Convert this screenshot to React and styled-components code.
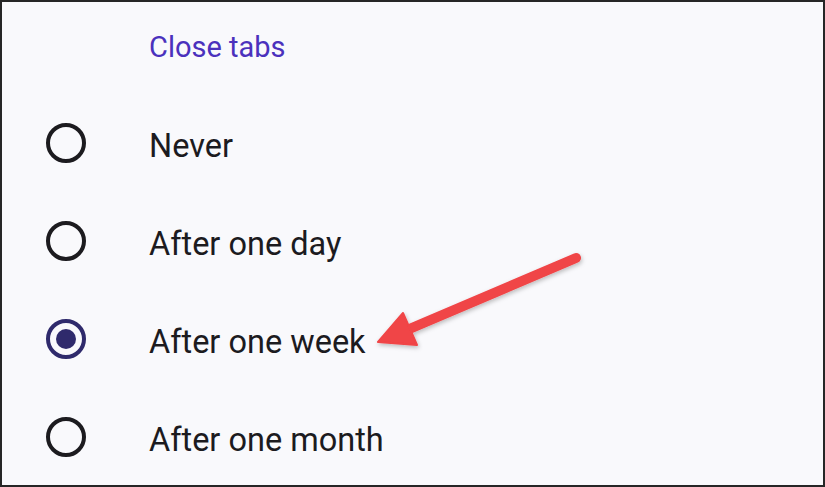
import React from 'react';
import styled, { createGlobalStyle } from 'styled-components';

const GlobalStyle = createGlobalStyle`
  html, body {
    margin: 0;
    padding: 0;
    background: #f9f9fc;
  }
  * {
    box-sizing: border-box;
  }
`;

const Frame = styled.div`
  position: relative;
  width: 825px;
  height: 487px;
  overflow: hidden;
  background: #f9f9fc;
  border: 2px solid #262626;
  font-family: Roboto, 'Noto Sans', sans-serif;
`;

const Heading = styled.h2`
  margin: 0;
  padding: 27px 0 0 147px;
  height: 92px;
  font-size: 29px;
  line-height: 36px;
  font-weight: 400;
  color: #4b31bd;
`;

const OptionList = styled.ul`
  margin: 0;
  padding: 0;
  list-style: none;
`;

const Row = styled.li`
  display: flex;
  align-items: center;
  height: 98px;
  padding-left: 44px;
  gap: 63px;
`;

const Radio = styled.span`
  position: relative;
  flex: none;
  width: 40px;
  height: 40px;
  border-radius: 50%;
  border: 4px solid ${({ checked }) => (checked ? '#2f2a6c' : '#1c1b1f')};

  &::after {
    content: '';
    display: ${({ checked }) => (checked ? 'block' : 'none')};
    position: absolute;
    top: 6px;
    left: 6px;
    width: 20px;
    height: 20px;
    border-radius: 50%;
    background: #2f2a6c;
  }
`;

const Label = styled.span`
  padding-top: 5px;
  font-size: 32.5px;
  line-height: 40px;
  color: #1c1b1f;
`;

const Arrow = styled.svg`
  position: absolute;
  left: 0;
  top: 0;
  pointer-events: none;
`;

const options = [
  { label: 'Never' },
  { label: 'After one day' },
  { label: 'After one week', checked: true },
  { label: 'After one month' },
];

export default function App() {
  return (
    <>
      <GlobalStyle />
      <Frame>
        <Heading>Close tabs</Heading>
        <OptionList>
          {options.map(({ label, checked }) => (
            <Row key={label}>
              <Radio checked={checked} />
              <Label>{label}</Label>
            </Row>
          ))}
        </OptionList>
        {/* callout arrow pointing at the selected option */}
        <Arrow width="825" height="487" viewBox="0 0 825 487">
          <defs>
            <filter id="shade" x="-20%" y="-20%" width="140%" height="140%">
              <feDropShadow dx="1" dy="2" stdDeviation="2" floodColor="#000" floodOpacity="0.25" />
            </filter>
          </defs>
          <g filter="url(#shade)" fill="#f04446" stroke="#f04446">
            <line x1="574" y1="256" x2="405" y2="328" strokeWidth="10" strokeLinecap="round" />
            <polygon points="376,340 401,311 415,343" strokeWidth="2" strokeLinejoin="round" />
          </g>
        </Arrow>
      </Frame>
    </>
  );
}
